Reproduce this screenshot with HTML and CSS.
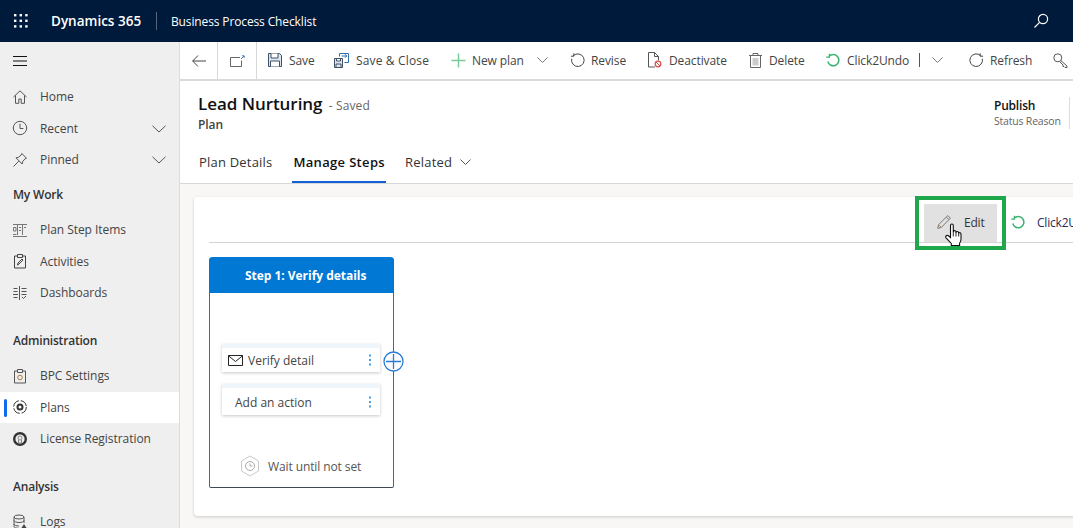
FILE: index.html
```html
<!DOCTYPE html>
<html lang="en">
<head>
  <meta charset="UTF-8" />
  <title>Lead Nurturing - Plan</title>
  <link rel="stylesheet" href="styles.css">
</head>
<body>
  <header class="topbar">
    <svg class="waffle" width="14" height="14" viewBox="0 0 14 14" fill="#fff"><rect x="0" y="0" width="2.4" height="2.4"/><rect x="5.6" y="0" width="2.4" height="2.4"/><rect x="11.2" y="0" width="2.4" height="2.4"/><rect x="0" y="5.6" width="2.4" height="2.4"/><rect x="5.6" y="5.6" width="2.4" height="2.4"/><rect x="11.2" y="5.6" width="2.4" height="2.4"/><rect x="0" y="11.2" width="2.4" height="2.4"/><rect x="5.6" y="11.2" width="2.4" height="2.4"/><rect x="11.2" y="11.2" width="2.4" height="2.4"/></svg>
    <span class="brand">Dynamics 365</span>
    <span class="app-name">Business Process Checklist</span>
    <svg class="top-search" width="16" height="16" viewBox="0 0 16 16" fill="none" stroke="#fff" stroke-width="1.2"><circle cx="10" cy="6" r="4.6"/><path d="M6.6 9.4 1.5 14.5"/></svg>
  </header>

  <div class="layout">
    <nav class="sidebar">
      <div class="burger"><svg width="14" height="10" viewBox="0 0 14 10" stroke="#111" stroke-width="1"><path d="M0 .5h14M0 5h14M0 9.500h14"/></svg></div>
      <a class="nav-row"><svg class="nav-icon" viewBox="0 0 16 16" fill="none" stroke="#555"><path d="M1.500 8 8 1.800 14.500 8M3.500 6.500v7.800h3.300v-4.300h2.400v4.300h3.300V6.500"/></svg>Home</a>
      <a class="nav-row"><svg class="nav-icon" viewBox="0 0 16 16" fill="none" stroke="#555"><circle cx="8" cy="8" r="6.700"/><path d="M8 3.800V8.500h3.400"/></svg>Recent<svg class="nav-chev" viewBox="0 0 14 8" fill="none" stroke="#555"><path d="M.5.800 7 7 13.500.8"/></svg></a>
      <a class="nav-row"><svg class="nav-icon" viewBox="0 0 16 16" fill="none" stroke="#555"><path d="M9.800 1.500 14.500 6.200 13 6.800 10.500 9.800 10.200 12 4 5.800 6.200 5.500 9.200 3ZM6.800 9.200 1.500 14.500"/></svg>Pinned<svg class="nav-chev" viewBox="0 0 14 8" fill="none" stroke="#555"><path d="M.5.800 7 7 13.500.8"/></svg></a>

      <div class="nav-group first">My Work</div>
      <a class="nav-row"><svg class="nav-icon" viewBox="0 0 16 16" fill="none" stroke="#777"><path d="M1 2.500h14M5.500 2.500v10.500M10.500 2.500v10.500M1.500 5.500h2.500v3.500h-2.500zM1 14.500h14M1 12.500h3.500M7 5.500h2M7 8.500h2M12 5.500h2"/></svg>Plan Step Items</a>
      <a class="nav-row"><svg class="nav-icon" viewBox="0 0 16 16" fill="none" stroke="#444"><path d="M5 3H2.500v12h11V3H11M5.500 1.500h5v3h-5zM5.500 12l.5-2L10 6l1 1-4 4z"/></svg>Activities</a>
      <a class="nav-row"><svg class="nav-icon" viewBox="0 0 16 16" fill="none" stroke="#555"><path d="M7.500 1v14M1.500 3.500h4M1.500 6.500h4M9.500 3.500h5M9.500 6.500h5M1 9.500h5M1.500 12.500h4M9.500 9.500h5M10 12l1.500 1.500 2.500-2.500"/></svg>Dashboards</a>

      <div class="nav-group">Administration</div>
      <a class="nav-row"><svg class="nav-icon" viewBox="0 0 16 16" fill="none" stroke="#555"><path d="M5 3H2.500v12h11V3H11M5.500 1.500h5v3h-5z"/><circle cx="8" cy="9.500" r="2.300" stroke="#a67c37"/></svg>BPC Settings</a>
      <a class="nav-row active"><svg class="nav-icon" viewBox="0 0 16 16" fill="none" stroke="#333"><circle cx="8" cy="8" r="6.300" stroke-dasharray="8 1.900"/><circle cx="8" cy="8" r="2.500" stroke-width="2"/></svg>Plans</a>
      <a class="nav-row"><svg class="nav-icon" viewBox="0 0 16 16" fill="none" stroke="#333"><circle cx="8" cy="8" r="5.800" stroke-width="2.400"/><circle cx="8" cy="7" r="2" stroke="#888"/><path d="M6.500 9v3h3V9" stroke="#888"/></svg>License Registration</a>

      <div class="nav-group">Analysis</div>
      <a class="nav-row"><svg class="nav-icon" viewBox="0 0 16 16" fill="none" stroke="#555"><ellipse cx="7" cy="3" rx="5" ry="2"/><path d="M2 3v9.500c0 1 2.200 1.800 5 1.800M12 3v6M2 6.500c0 1 2.200 2 5 2s5-1 5-2M2 10c0 1 2.200 2 5 2"/><path d="M12 10l3.500 5.500h-7z" fill="#444" stroke="none"/></svg>Logs</a>
    </nav>

    <main class="main">
      <div class="cmdbar">
        <button class="cmd cmd-nav back"><svg width="14" height="12" viewBox="0 0 14 12" fill="none" stroke="#444"><path d="M6 .5.700 6 6 11.500M.7 6H14"/></svg></button>
        <button class="cmd cmd-nav pop"><svg width="15" height="12" viewBox="0 0 15 12" fill="none" stroke="#666"><path d="M10 2.500H.5v9h11V5.500"/><path d="M11 4 14 1M12 .8h2.200V3" stroke="#4a7fb5"/></svg></button>
        <button class="cmd save"><svg width="14" height="14" viewBox="0 0 14 14" fill="#fff" stroke="#3e5166"><path d="M.5.500h11l2 2v11H.5z" fill="#dfe6ee"/><path d="M3 .5v4.500h7V.5M2.500 13.500V8h9v5.500" fill="#fff"/></svg>Save</button>
        <button class="cmd save-close"><svg width="15" height="15" viewBox="0 0 15 15" fill="none" stroke="#3e5166"><path d="M.5 5.500h8v9h-8zM2.500 5.500V8h4V5.500M2 14.500V11h5v3.500" fill="#dfe6ee"/><path d="M5.500 3.500V.5h9v9h-4M7.500 3h5M11 1.200 12.800 3 11 4.800" stroke="#2f6fb0"/></svg>Save &amp; Close</button>
        <button class="cmd new-plan"><svg width="15" height="15" viewBox="0 0 15 15" stroke="#7cc99a" stroke-width="1.500"><path d="M7.500.5v14M.5 7.500h14"/></svg>New plan<svg class="cmd-chev" width="11" height="6" viewBox="0 0 11 6" fill="none" stroke="#777"><path d="M.5.500 5.500 5.500 10.500.5"/></svg></button>
        <button class="cmd revise"><svg width="15" height="15" viewBox="0 0 15 15" fill="none" stroke="#444"><path d="M3.400 2.700a6.300 6.300 0 1 1-1.700 3"/><path d="M3.800.3v2.900H.9"/></svg>Revise</button>
        <button class="cmd deactivate"><svg width="15" height="16" viewBox="0 0 15 16" fill="none" stroke="#555"><path d="M8 15H1.500V.5h6l4 4v4M7.500.5v4h4"/><circle cx="11" cy="12" r="2.800" stroke="#d9534f" stroke-width="1.300"/><path d="M9 10 13 14" stroke="#d9534f"/></svg>Deactivate</button>
        <button class="cmd delete"><svg width="13" height="15" viewBox="0 0 13 15" fill="none" stroke="#666"><path d="M0 2.500h13M4 2.500V.5h5v2M1.500 2.500v12h10v-12"/><path d="M3.500 5h6v7.500h-6z" fill="#ccc" stroke="none"/></svg>Delete</button>
        <button class="cmd undo"><svg width="15" height="15" viewBox="0 0 15 15" fill="none" stroke="#3cb371" stroke-width="1.500"><path d="M3 3.500a5.600 5.600 0 1 1-1.200 5"/><path d="M3.400.8v3.400H.2" stroke-width="1.200"/></svg>Click2Undo<span class="cmd-sep"></span><svg class="cmd-chev small" width="11" height="6" viewBox="0 0 11 6" fill="none" stroke="#777"><path d="M.5.500 5.500 5.500 10.500.5"/></svg></button>
        <button class="cmd refresh"><svg width="15" height="15" viewBox="0 0 15 15" fill="none" stroke="#444"><path d="M11.600 2.700a6.300 6.300 0 1 0 1.700 3"/><path d="M11.200.3v2.900h2.900"/></svg>Refresh</button>
        <button class="cmd key"><svg width="15" height="15" viewBox="0 0 15 15" fill="none" stroke="#555"><circle cx="4.800" cy="4.800" r="4"/><path d="M7.800 7.500 14 13v1.500h-2l-1-1-1 0V12L7 9"/></svg></button>
      </div>

      <section class="form-head">
        <div class="title-row">
          <div>
            <h1 class="title">Lead Nurturing <span class="saved">- Saved</span></h1>
            <div class="entity">Plan</div>
          </div>
          <div class="head-field">
            <div class="field-value">Publish</div>
            <div class="field-label">Status Reason</div>
          </div>
        </div>
        <div class="tabs">
          <a class="tab">Plan Details</a>
          <a class="tab tab-on">Manage Steps</a>
          <a class="tab">Related<svg class="tab-chev" width="11" height="6" viewBox="0 0 11 6" fill="none" stroke="#555"><path d="M.5.500 5.500 5.500 10.500.5"/></svg></a>
        </div>
      </section>

      <section class="content">
        <div class="card">
          <div class="card-bar">
            <div class="highlight">
              <button class="edit-btn"><svg width="14" height="14" viewBox="0 0 14 14" fill="none" stroke="#777"><path d="M.7 13.300l.9-3.600L10.800.6l2.600 2.600-9.100 9.200z"/><path d="M1.600 9.700l2.700 2.700" stroke="#b98a58"/><path d="M9.300 2.100l2.600 2.600"/></svg>Edit</button>
              <svg class="hand" width="18" height="24" viewBox="0 0 18 24"><path d="M5.500 2.500c0-2 2.800-2 2.800 0V9l.4-1c1-.8 2.400-.2 2.400 1l.3-.2c1-.7 2.300 0 2.300 1.100.9-.6 2.300 0 2.300 1.300v5c0 1.500-.6 2.800-1.400 4v2.300H6.300v-2C4.800 18.700 1 14.800 1 14.800c-1-1.600.8-3.200 2.400-2l2.100 1.700z" fill="#fff" stroke="#111" stroke-width="1.100"/><path d="M8.300 9v4.500M11 9v4.500M13.700 10v3.500" stroke="#111" stroke-width=".9"/></svg>
            </div>
            <div class="bar-undo"><svg width="15" height="15" viewBox="0 0 15 15" fill="none" stroke="#3cb371" stroke-width="1.500"><path d="M3 3.500a5.600 5.600 0 1 1-1.200 5"/><path d="M3.400.8v3.400H.2" stroke-width="1.200"/></svg>Click2Undo</div>
          </div>

          <div class="step">
            <div class="step-head">Step 1: Verify details</div>
            <div class="action first-action">
              <svg width="15" height="11" viewBox="0 0 15 11" fill="none" stroke="#222"><path d="M.5.500h14v10H.5zM.5.800 7.500 6.500 14.500.8"/></svg>
              <span class="action-text">Verify detail</span>
              <span class="kebab"></span>
            </div>
            <div class="action second-action">
              <span class="action-text">Add an action</span>
              <span class="kebab"></span>
            </div>
            <div class="wait">
              <svg width="20" height="22" viewBox="0 0 20 22" fill="none" stroke="#c9c9c9"><path d="M10 1 18.500 6v10L10 21 1.500 16V6z"/><circle cx="10" cy="11" r="4.500" stroke="#aaa"/><path d="M10 8.500V11h2.300" stroke="#aaa"/></svg>
              Wait until not set
            </div>
            <svg class="add-step" width="21" height="21" viewBox="0 0 21 21" fill="#fff" stroke="#2b7cd3" stroke-width="1.300"><circle cx="10.500" cy="10.500" r="9.500"/><path d="M3 10.500h15M10.500 3v15"/></svg>
          </div>
        </div>
      </section>
    </main>
  </div>
</body>
</html>
```

FILE: styles.css
```css
* {
  box-sizing: border-box;
}
html, body {
  margin: 0;
  height: 528px;
  overflow: hidden;
}
body {
  font-family: "Open Sans", "Noto Sans", sans-serif;
  font-size: 12px;
  color: #333;
  background-color: #fff;
}
svg {
  display: block;
  flex: none;
}
button {
  font: inherit;
  color: inherit;
  background: none;
  border: none;
  padding: 0;
}

/* top bar */
.topbar {
  display: flex;
  align-items: center;
  height: 42px;
  padding-left: 14px;
  background-color: #001a3b;
  color: #fff;
}
.brand {
  margin-left: 23px;
  font-size: 13.5px;
  font-weight: 600;
  width: 106px;
  border-right: 1px solid #56657c;
  line-height: 18px;
}
.app-name {
  margin-left: 14px;
  font-size: 12px;
  letter-spacing: -0.13px;
}
.top-search {
  margin-left: auto;
  margin-right: 24px;
}

.layout {
  display: flex;
  height: 486px;
}

/* left nav */
.sidebar {
  width: 180px;
  flex: none;
  background-color: #efefef;
  border-right: 1px solid #dcdcdc;
  overflow: hidden;
}
.burger {
  height: 39px;
  padding: 14px 0 0 13px;
}
.nav-row {
  display: flex;
  align-items: center;
  position: relative;
  height: 31.5px;
  padding-left: 12px;
  letter-spacing: -0.05px;
  color: #444;
}
.nav-icon {
  width: 16px;
  height: 16px;
  margin-right: 12px;
}
.nav-chev {
  width: 14px;
  height: 8px;
  position: absolute;
  right: 13px;
  top: 12px;
}
.nav-row.active {
  background-color: #fff;
}
.nav-row.active::before {
  content: "";
  position: absolute;
  left: 4px;
  top: 7px;
  width: 3px;
  height: 18px;
  background-color: #0f6cf0;
  border-radius: 2px;
}
.nav-group {
  display: flex;
  align-items: center;
  height: 38.5px;
  margin-top: 13px;
  padding-left: 13px;
  font-weight: 600;
  letter-spacing: -0.2px;
  color: #333;
}
.nav-group.first {
  margin-top: 0;
}

/* command bar */
.main {
  flex: 1;
  min-width: 0;
  display: flex;
  flex-direction: column;
  overflow: hidden;
}
.cmdbar {
  display: flex;
  flex: none;
  align-items: flex-start;
  height: 39px;
  border-bottom: 2px solid #dadada;
  white-space: nowrap;
}
.cmd {
  display: flex;
  flex: none;
  align-items: center;
  height: 36px;
  gap: 6px;
  letter-spacing: -0.1px;
  color: #444;
}
.cmd-nav {
  justify-content: center;
  height: 37px;
  border-right: 1px solid #d8d8d8;
}
.back { width: 38px; }
.pop { width: 39px; }
.save { margin-left: 11px; width: 66px; gap: 7px; }
.save-close { width: 117px; gap: 7px; letter-spacing: 0.15px; }
.new-plan { width: 119px; }
.revise { width: 77px; }
.deactivate { width: 102px; gap: 7px; }
.delete { width: 77px; gap: 7px; }
.undo { width: 143px; }
.refresh { width: 84px; }
.cmd-chev {
  margin-left: 7px;
}
.cmd-chev.small {
  margin-left: 6px;
}
.cmd-sep {
  width: 1px;
  height: 14px;
  margin-left: 4px;
  background-color: #555;
}

/* form header */
.form-head {
  flex: none;
  height: 103px;
  padding-left: 18px;
  border-bottom: 1px solid #d8d8d8;
}
.title-row {
  display: flex;
  justify-content: space-between;
  height: 50px;
  padding-top: 11px;
}
.title {
  margin: 0;
  font-size: 17px;
  line-height: 23px;
  font-weight: 600;
  color: #111;
  letter-spacing: -0.05px;
}
.saved {
  font-size: 12px;
  font-weight: 400;
  color: #666;
  margin-left: 2px;
  letter-spacing: 0.1px;
}
.entity {
  font-weight: 600;
  line-height: 15px;
  letter-spacing: -0.1px;
  color: #444;
}
.head-field {
  width: 76px;
  height: 32px;
  margin-top: 5px;
  margin-right: 3px;
  border-right: 1px solid #ddd;
}
.field-value {
  font-weight: 600;
  color: #111;
  line-height: 17px;
  letter-spacing: -0.2px;
}
.field-label {
  font-size: 10.500px;
  color: #666;
  line-height: 15px;
  letter-spacing: -0.2px;
}
.tabs {
  display: flex;
  height: 52px;
  padding-top: 11px;
  gap: 20px;
  font-size: 13px;
}
.tab {
  display: flex;
  align-items: center;
  height: 41px;
  color: #333;
  letter-spacing: 0.2px;
  padding: 0 1px;
  border-bottom: 2px solid transparent;
}
.tab-on {
  font-weight: 600;
  color: #111;
  border-bottom-color: #1160d8;
  letter-spacing: 0.33px;
  margin-left: -1px;
  margin-right: -2px;
}
.tab-chev {
  margin-left: 8px;
}

/* content card */
.content {
  flex: 1;
  padding: 13px 0 0 14px;
  background-color: #f8f7f6;
}
.card {
  width: 900px;
  height: 319px;
  padding: 0 0 0 15px;
  background-color: #fff;
  border-radius: 4px;
  box-shadow: 0 1px 3px rgba(0, 0, 0, 0.18);
}
.card-bar {
  display: flex;
  align-items: flex-start;
  height: 46px;
  border-bottom: 1px solid #d4d4d4;
}
.highlight {
  position: relative;
  width: 91px;
  height: 54px;
  margin-left: 706px;
  margin-top: -1px;
  padding: 4px 5px 5px;
  border: 4px solid #1ea84b;
  z-index: 1;
}
.edit-btn {
  display: flex;
  align-items: center;
  width: 73px;
  height: 38px;
  padding: 0 0 2px 13px;
  gap: 13px;
  background-color: #e1e1e1;
  letter-spacing: -0.2px;
}
.hand {
  position: absolute;
  left: 26px;
  top: 23px;
}
.bar-undo {
  display: flex;
  align-items: center;
  gap: 11px;
  height: 36px;
  margin-left: 5px;
  margin-top: 7px;
  white-space: nowrap;
  letter-spacing: -0.2px;
  color: #2a2a55;
}

/* step */
.step {
  position: relative;
  width: 185px;
  height: 231px;
  margin-top: 14px;
  border: 1px solid #3f4a55;
  border-top: none;
  border-left-color: #2a6db0;
  border-right-color: #2a6db0;
  border-radius: 4px 4px 2px 2px;
  background-color: #fff;
}
.step-head {
  height: 36px;
  margin: 0 -1px;
  padding-left: 36px;
  line-height: 38px;
  font-weight: 700;
  letter-spacing: -0.03px;
  color: #fff;
  background-color: #0078d4;
  border-radius: 4px 4px 0 0;
}
.action {
  display: flex;
  align-items: center;
  position: relative;
  width: 158px;
  margin-left: 12px;
  background-color: #fff;
  border-top: 4px solid #eef6fc;
  box-shadow: 0 1px 3px rgba(0, 0, 0, 0.22);
  color: #444;
}
.first-action {
  height: 28px;
  margin-top: 51px;
  padding-left: 6px;
  gap: 5px;
}
.second-action {
  height: 31px;
  margin-top: 12px;
  padding: 1px 0 0 13px;
}
.kebab {
  position: absolute;
  right: 9px;
  top: 50%;
  width: 2px;
  height: 2px;
  margin-top: -1px;
  background-color: #4a9ee0;
  box-shadow: 0 -4.500px 0 #4a9ee0, 0 4.500px 0 #4a9ee0;
}
.wait {
  display: flex;
  align-items: center;
  gap: 8px;
  margin-top: 40px;
  padding-left: 30px;
  height: 22px;
  letter-spacing: -0.1px;
  color: #555;
}
.add-step {
  position: absolute;
  left: 173px;
  top: 94px;
}
```
